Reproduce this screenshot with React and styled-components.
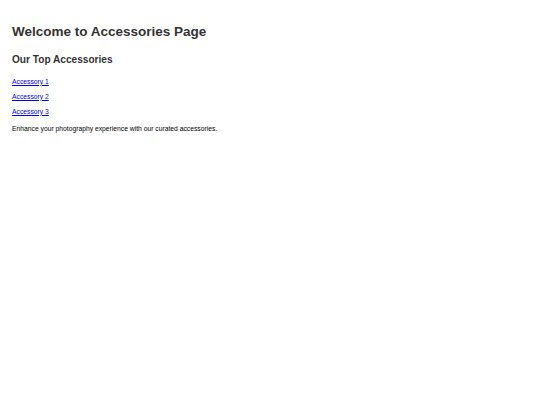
import React from 'react';
import styled, { createGlobalStyle } from 'styled-components';

const GlobalStyle = createGlobalStyle`
  body {
    margin: 0;
    background: #fff;
    font-family: "Liberation Sans", Arial, sans-serif;
    font-size: 6.75px;
  }
`;

const Page = styled.div`
  padding: 24px 12px 12px;
`;

const Title = styled.h1`
  font-size: 13.5px;
  line-height: 16px;
  color: #333;
  margin: 0;
`;

const SubTitle = styled.h2`
  font-size: 10.125px;
  line-height: 12px;
  color: #333;
  margin: 13.6px 0 0;
`;

const LinkList = styled.ul`
  list-style: none;
  padding: 0;
  margin: 12px 0 0;
  display: flex;
  flex-direction: column;
  gap: 7px;
`;

const LinkItem = styled.li`
  line-height: 8px;
`;

const Link = styled.a`
  color: #00e;
  text-decoration: underline;
`;

const Blurb = styled.p`
  line-height: 8px;
  color: #000;
  margin: 9.5px 0 0;
`;

const items = ['Accessory 1', 'Accessory 2', 'Accessory 3'];

export default function App() {
  return (
    <>
      <GlobalStyle />
      <Page>
        <Title>Welcome to Accessories Page</Title>
        <SubTitle>Our Top Accessories</SubTitle>
        <LinkList>
          {items.map(name => (
            <LinkItem key={name}>
              <Link href="#">{name}</Link>
            </LinkItem>
          ))}
        </LinkList>
        <Blurb>Enhance your photography experience with our curated accessories.</Blurb>
      </Page>
    </>
  );
}
